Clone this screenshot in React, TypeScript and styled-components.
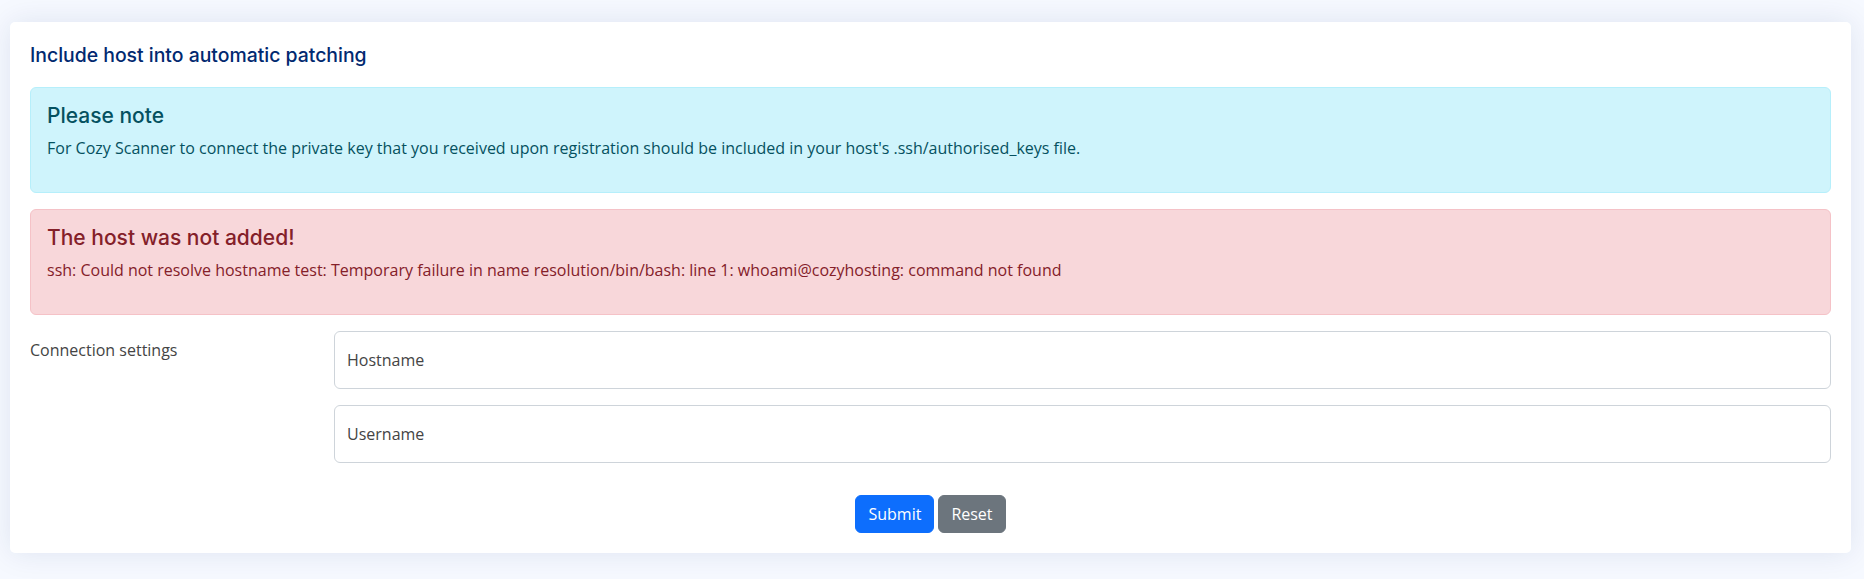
import React from 'react'
import styled, { createGlobalStyle } from 'styled-components'

const GlobalStyle = createGlobalStyle`
  html, body {
    margin: 0;
    padding: 0;
    background: #f6f9ff;
  }
  body {
    font-family: "Open Sans", "Liberation Sans", sans-serif;
    color: #444444;
  }
  * { box-sizing: border-box; }
`

const Page = styled.main`
  padding: 22px 13px 26px 10px;
`

const Card = styled.section`
  background: #ffffff;
  border-radius: 5px;
  box-shadow: 0 0 30px rgba(1, 41, 112, 0.1);
  padding: 0 20px 20px;
`

const CardTitle = styled.h5`
  margin: 0;
  padding: 22px 0 21px;
  font-family: Inter, "Noto Sans", sans-serif;
  font-size: 19.4px;
  line-height: 22px;
  font-weight: 500;
  color: #012970;
`

const Alert = styled.div<{ $tone: 'info' | 'danger' }>`
  border: 1px solid ${p => (p.$tone === 'info' ? '#b6effb' : '#f5c2c7')};
  background: ${p => (p.$tone === 'info' ? '#cff4fc' : '#f8d7da')};
  color: ${p => (p.$tone === 'info' ? '#055160' : '#842029')};
  border-radius: 6px;
  padding: 16px;
  margin-bottom: 16px;
`

const AlertHeading = styled.h4`
  margin: 0 0 8px;
  font-family: Inter, "Noto Sans", sans-serif;
  font-size: 21px;
  line-height: 24px;
  font-weight: 500;
  color: inherit;
`

const AlertText = styled.p`
  margin: 0 0 16px;
  font-size: 16px;
  line-height: 24px;
`

const FormRow = styled.div`
  display: grid;
  grid-template-columns: 304px 1fr;
  margin: 0 -12px;
`

const RowLabel = styled.label`
  padding: 7px 12px 0;
  font-size: 16px;
  line-height: 24px;
  color: #444444;
`

const Fields = styled.div`
  padding: 0 12px;
  display: flex;
  flex-direction: column;
  gap: 16px;
`

const Field = styled.input`
  display: block;
  width: 100%;
  height: 58px;
  padding: 0 12px;
  border: 1px solid #ced4da;
  border-radius: 6px;
  background: #ffffff;
  font-family: "Open Sans", "Liberation Sans", sans-serif;
  font-size: 16px;
  color: #212529;
  outline: none;

  &::placeholder {
    color: #444444;
    opacity: 1;
  }
`

const Actions = styled.div`
  display: flex;
  justify-content: center;
  gap: 4px;
  margin-top: 32px;
`

const Button = styled.button<{ $variant: 'primary' | 'secondary' }>`
  font-family: "Open Sans", "Liberation Sans", sans-serif;
  font-size: 16px;
  line-height: 24px;
  padding: 6px 12px;
  border-radius: 6px;
  border: 1px solid ${p => (p.$variant === 'primary' ? '#0d6efd' : '#6c757d')};
  background: ${p => (p.$variant === 'primary' ? '#0d6efd' : '#6c757d')};
  color: #ffffff;
  cursor: pointer;
`

export default function App() {
  return (
    <>
      <GlobalStyle />
      <Page>
        <Card>
          <CardTitle>Include host into automatic patching</CardTitle>

          <Alert $tone="info">
            <AlertHeading>Please note</AlertHeading>
            <AlertText>
              For Cozy Scanner to connect the private key that you received upon registration should be included in your host's .ssh/authorised_keys file.
            </AlertText>
          </Alert>

          <Alert $tone="danger">
            <AlertHeading>The host was not added!</AlertHeading>
            <AlertText>
              ssh: Could not resolve hostname test: Temporary failure in name resolution/bin/bash: line 1: whoami@cozyhosting: command not found
            </AlertText>
          </Alert>

          <form onSubmit={e => e.preventDefault()}>
            <FormRow>
              <RowLabel>Connection settings</RowLabel>
              <Fields>
                <Field type="text" placeholder="Hostname" />
                <Field type="text" placeholder="Username" />
              </Fields>
            </FormRow>
            <Actions>
              <Button $variant="primary" type="submit">Submit</Button>
              <Button $variant="secondary" type="reset">Reset</Button>
            </Actions>
          </form>
        </Card>
      </Page>
    </>
  )
}
